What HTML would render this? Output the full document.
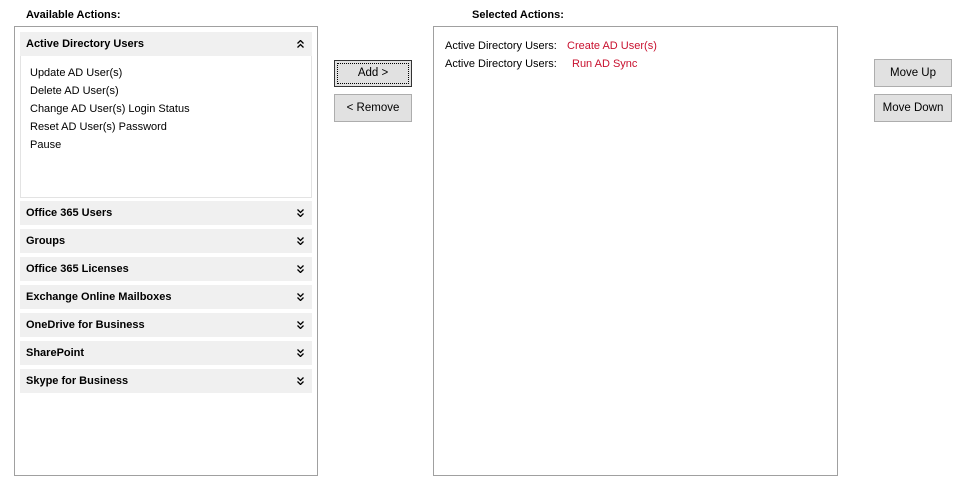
<!DOCTYPE html>
<html><head><style>
*{margin:0;padding:0;box-sizing:border-box}
body{width:960px;height:498px;background:#fff;font-family:"Liberation Sans",Tahoma,sans-serif;font-size:11px;color:#000;position:relative;overflow:hidden}
.a{position:absolute}
.lbl{font-weight:bold;font-size:11px}
.panel{border:1px solid #a0a0a0;background:#fff}
.hdr{position:absolute;left:20px;width:292px;height:24px;background:#f0f0f0;font-weight:bold;font-size:11px;line-height:25px;padding-left:6px}
.hdr svg{position:absolute;right:8px;top:8px}
.it{position:absolute;left:30px;line-height:18px}
.btn{position:absolute;background:#e1e1e1;border:1px solid #adadad;text-align:center;font-size:11.5px}
.red{color:#c8102e}
</style></head><body>
<div class="a lbl" style="left:26px;top:9px">Available Actions:</div>
<div class="a lbl" style="left:472px;top:9px">Selected Actions:</div>
<div class="a panel" style="left:14px;top:26px;width:304px;height:450px"></div>
<div class="hdr" style="top:32px">Active Directory Users<svg width="7" height="8" viewBox="0 0 7 8"><path d="M0.5 3.5L3.5 0.5L6.5 3.5M0.5 7.5L3.5 4.5L6.5 7.5" fill="none" stroke="#000" stroke-width="1.3"/></svg></div>
<div class="a" style="left:20px;top:56px;width:292px;height:142px;border:1px solid #e3e3e3;border-top:none"></div>
<div class="it" style="top:64px">Update AD User(s)</div>
<div class="it" style="top:82px">Delete AD User(s)</div>
<div class="it" style="top:100px">Change AD User(s) Login Status</div>
<div class="it" style="top:118px">Reset AD User(s) Password</div>
<div class="it" style="top:136px">Pause</div>
<div class="hdr" style="top:201px">Office 365 Users<svg width="7" height="8" viewBox="0 0 7 8"><path d="M0.5 0.5L3.5 3.5L6.5 0.5M0.5 4.5L3.5 7.5L6.5 4.5" fill="none" stroke="#000" stroke-width="1.3"/></svg></div>
<div class="hdr" style="top:229px">Groups<svg width="7" height="8" viewBox="0 0 7 8"><path d="M0.5 0.5L3.5 3.5L6.5 0.5M0.5 4.5L3.5 7.5L6.5 4.5" fill="none" stroke="#000" stroke-width="1.3"/></svg></div>
<div class="hdr" style="top:257px">Office 365 Licenses<svg width="7" height="8" viewBox="0 0 7 8"><path d="M0.5 0.5L3.5 3.5L6.5 0.5M0.5 4.5L3.5 7.5L6.5 4.5" fill="none" stroke="#000" stroke-width="1.3"/></svg></div>
<div class="hdr" style="top:285px">Exchange Online Mailboxes<svg width="7" height="8" viewBox="0 0 7 8"><path d="M0.5 0.5L3.5 3.5L6.5 0.5M0.5 4.5L3.5 7.5L6.5 4.5" fill="none" stroke="#000" stroke-width="1.3"/></svg></div>
<div class="hdr" style="top:313px">OneDrive for Business<svg width="7" height="8" viewBox="0 0 7 8"><path d="M0.5 0.5L3.5 3.5L6.5 0.5M0.5 4.5L3.5 7.5L6.5 4.5" fill="none" stroke="#000" stroke-width="1.3"/></svg></div>
<div class="hdr" style="top:341px">SharePoint<svg width="7" height="8" viewBox="0 0 7 8"><path d="M0.5 0.5L3.5 3.5L6.5 0.5M0.5 4.5L3.5 7.5L6.5 4.5" fill="none" stroke="#000" stroke-width="1.3"/></svg></div>
<div class="hdr" style="top:369px">Skype for Business<svg width="7" height="8" viewBox="0 0 7 8"><path d="M0.5 0.5L3.5 3.5L6.5 0.5M0.5 4.5L3.5 7.5L6.5 4.5" fill="none" stroke="#000" stroke-width="1.3"/></svg></div>
<div class="btn" style="left:334px;top:60px;width:78px;height:27px;line-height:25px;border-color:#333;outline:1px dotted #000;outline-offset:-4px">Add &gt;</div>
<div class="btn" style="left:334px;top:94px;width:78px;height:28px;line-height:26px">&lt; Remove</div>
<div class="a panel" style="left:433px;top:26px;width:405px;height:450px"></div>
<div class="a" style="left:445px;top:37px;line-height:18px">Active Directory Users:</div>
<div class="a red" style="left:567px;top:37px;line-height:18px">Create AD User(s)</div>
<div class="a" style="left:445px;top:55px;line-height:18px">Active Directory Users:</div>
<div class="a red" style="left:572px;top:55px;line-height:18px">Run AD Sync</div>
<div class="btn" style="left:874px;top:59px;width:78px;height:28px;line-height:27px">Move Up</div>
<div class="btn" style="left:874px;top:94px;width:78px;height:28px;line-height:27px">Move Down</div>
</body></html>
